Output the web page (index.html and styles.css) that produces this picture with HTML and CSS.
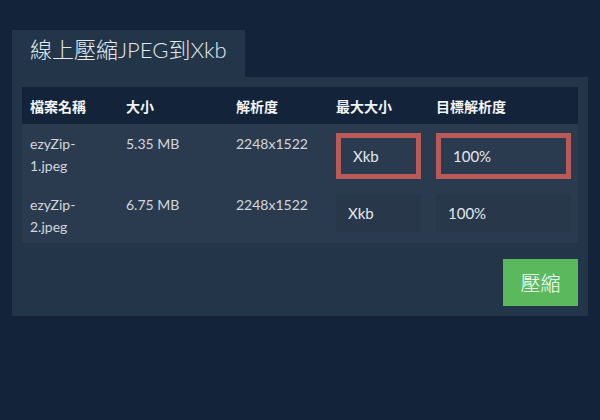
FILE: index.html
```html
<!DOCTYPE html>
<html lang="zh-Hant">
<head>
  <meta charset="UTF-8" />
  <meta name="viewport" content="width=device-width, initial-scale=1.0"/>
  <title>線上壓縮JPEG到Xkb</title>
  <link rel="stylesheet" href="styles.css">
</head>
<body>

  <!-- 標題分頁 -->
  <div class="tab">
    <h1>線上壓縮JPEG到Xkb</h1>
  </div>

  <!-- 檔案列表 -->
  <div class="panel">
    <table class="files">
      <colgroup>
        <col class="col-name" />
        <col class="col-size" />
        <col class="col-res" />
        <col class="col-max" />
        <col class="col-target" />
      </colgroup>
      <thead>
        <tr>
          <th>檔案名稱</th>
          <th>大小</th>
          <th>解析度</th>
          <th>最大大小</th>
          <th>目標解析度</th>
        </tr>
      </thead>
      <tbody>
        <tr class="row-active">
          <td class="name">ezyZip-1.jpeg</td>
          <td>5.35 MB</td>
          <td>2248x1522</td>
          <td><input type="text" class="field field-max is-focus" value="Xkb" /></td>
          <td><input type="text" class="field field-target is-focus" value="100%" /></td>
        </tr>
        <tr class="row-plain">
          <td class="name">ezyZip-2.jpeg</td>
          <td>6.75 MB</td>
          <td>2248x1522</td>
          <td><input type="text" class="field field-max" value="Xkb" /></td>
          <td><input type="text" class="field field-target" value="100%" /></td>
        </tr>
      </tbody>
    </table>

    <div class="actions">
      <button class="btn-compress">壓縮</button>
    </div>
  </div>

</body>
</html>
```

FILE: styles.css
```css
/* Globalni stil */
body {
  font-family: 'Lato', 'Noto Sans CJK TC', sans-serif;
  background-color: #12233a;
  margin: 0;
  padding: 30px 12px 0;
  color: #d3d7dc;
}

/* Naslovni zavihek */
.tab {
  display: inline-block;
  background-color: #233649;
  padding: 0 18px;
  height: 47px;
}

.tab h1 {
  margin: 0;
  font-size: 22px;
  font-weight: 300;
  line-height: 40px;
  color: #e6e9ec;
}

.panel {
  background-color: #233649;
  padding: 10px;
}

/* Tabela */
.files {
  width: 100%;
  border-collapse: collapse;
  table-layout: fixed;
  font-size: 14px;
}

.col-name { width: 96px; }
.col-size { width: 110px; }
.col-res { width: 100px; }
.col-max { width: 100px; }
.col-target { width: 150px; }

.files thead tr {
  background-color: #12233a;
  height: 37px;
}

.files th {
  text-align: left;
  font-weight: bold;
  color: #f2f4f6;
  padding: 0 8px;
  vertical-align: middle;
}

.files tbody tr {
  background-color: #2b3b4f;
}

.row-active { height: 61px; }
.row-plain { height: 58px; }

.files td {
  padding: 9px 8px 0;
  vertical-align: top;
  line-height: 22px;
}

.files td.name {
  padding-right: 16px;
}

.field {
  display: block;
  box-sizing: border-box;
  height: 38px;
  margin: 0;
  padding: 0 0 0 12px;
  border: none;
  background-color: #28374a;
  font-family: 'Lato', sans-serif;
  font-size: 15px;
  color: #e4e7ea;
  outline: none;
}

.field-max { width: 85px; }
.field-target { width: 135px; }

.field.is-focus {
  height: 46px;
  border: 5px solid #b95a59;
  background-color: #2b3b4f;
}

/* Gumb */
.actions {
  display: flex;
  justify-content: flex-end;
  margin-top: 16px;
}

.btn-compress {
  width: 75px;
  height: 47px;
  background-color: #5cb85c;
  color: #fff;
  border: none;
  font-family: 'Lato', 'Noto Sans CJK TC', sans-serif;
  font-size: 20px;
  font-weight: 300;
  cursor: pointer;
}
```
